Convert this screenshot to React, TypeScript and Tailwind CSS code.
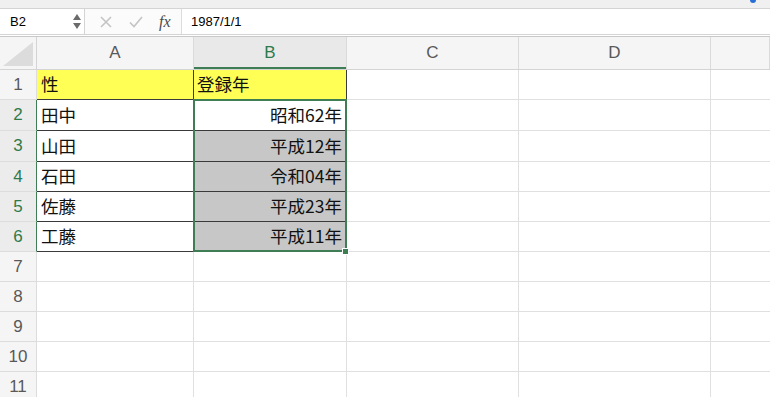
import React from "react";

const cols = [
  { key: "A", w: "w-[157px]" },
  { key: "B", w: "w-[153px]" },
  { key: "C", w: "w-[172px]" },
  { key: "D", w: "w-[192px]" },
  { key: "E", w: "flex-1" },
];

type Row = { a?: string; b?: string; gray?: boolean; h: string };

const rows: Row[] = [
  { a: "性", b: "登録年", h: "h-[30px]" },
  { a: "田中", b: "昭和62年", h: "h-[31px]" },
  { a: "山田", b: "平成12年", gray: true, h: "h-[31px]" },
  { a: "石田", b: "令和04年", gray: true, h: "h-[30px]" },
  { a: "佐藤", b: "平成23年", gray: true, h: "h-[30px]" },
  { a: "工藤", b: "平成11年", gray: true, h: "h-[30px]" },
  { h: "h-[30px]" },
  { h: "h-[30px]" },
  { h: "h-[30px]" },
  { h: "h-[30px]" },
  { h: "h-[30px]" },
];

const jp = "font-['Noto_Sans_CJK_JP','Noto_Sans',sans-serif] text-[17.5px] text-[#111]";

function FormulaBar() {
  return (
    <div className="flex h-[26px] border-b border-[#d4d4d4] bg-white">
      <div className="flex w-[85px] items-center justify-between border-r border-[#d4d4d4] pl-[10px] pr-[3px]">
        <span className="text-[13px] text-black">B2</span>
        <div className="flex flex-col items-center gap-[3px]">
          <svg width="8" height="6" viewBox="0 0 8 6">
            <path d="M4 0 L8 6 L0 6 Z" fill="#6b6b6b" />
          </svg>
          <svg width="8" height="6" viewBox="0 0 8 6">
            <path d="M0 0 L8 0 L4 6 Z" fill="#6b6b6b" />
          </svg>
        </div>
      </div>
      <div className="flex w-[96px] items-center bg-[#fbfbfb]">
        <svg width="12" height="12" viewBox="0 0 12 12" className="ml-[15px]">
          <path d="M1 1 L11 11 M11 1 L1 11" stroke="#c4c4c4" strokeWidth="1.6" />
        </svg>
        <svg width="14" height="12" viewBox="0 0 14 12" className="ml-[17px]">
          <path d="M1 6.5 L5 10.5 L13 1" stroke="#c4c4c4" strokeWidth="1.6" fill="none" />
        </svg>
        <span className="ml-[16px] font-['Liberation_Serif',serif] text-[16px] italic text-[#4a4a4a]">
          fx
        </span>
      </div>
      <div className="flex flex-1 items-center border-l border-[#dcdcdc] pl-[9px]">
        <span className="text-[13px] text-black">1987/1/1</span>
      </div>
    </div>
  );
}

function HeaderRow() {
  return (
    <div className="flex h-[33px] border-b border-[#d4d4d4] bg-[#f5f5f5]">
      <div className="relative w-[37px] border-r border-[#d4d4d4]">
        <svg width="30" height="24" viewBox="0 0 30 24" className="absolute bottom-[3px] right-[3px]">
          <path d="M30 0 L30 24 L0 24 Z" fill="#dcdcdc" />
        </svg>
      </div>
      {cols.map((c) => (
        <div
          key={c.key}
          className={`${c.w} flex items-center justify-center border-r border-[#dadada] text-[17px] ${
            c.key === "B"
              ? "bg-[#e9e9e9] text-[#2f7a4b] shadow-[inset_0_-2px_0_#3f7d55]"
              : "text-[#595959]"
          }`}
        >
          {c.key === "E" ? "" : c.key}
        </div>
      ))}
    </div>
  );
}

function SheetRow({ row, idx }: { row: Row; idx: number }) {
  const n = idx + 1;
  const inTable = n <= 6;
  const selected = n >= 2 && n <= 6;
  const dark = "border-[#3a3a3a]";
  const grid = "border-[#e0e0e0]";
  const fillA = n === 1 ? "bg-[#ffff55]" : "bg-white";
  const fillB = n === 1 ? "bg-[#ffff55]" : row.gray ? "bg-[#c7c7c7]" : "bg-white";
  return (
    <div className={`flex ${row.h}`}>
      <div
        className={`flex w-[37px] items-center justify-center border-b border-r text-[17px] ${
          selected
            ? "border-b-[#dcdcdc] border-r-[#3f7d55] bg-[#ececec] text-[#2f7a4b]"
            : "border-[#dcdcdc] bg-[#f5f5f5] text-[#595959]"
        }`}
      >
        {n}
      </div>
      <div
        className={`w-[157px] border-r border-b ${inTable ? `${dark} ${fillA}` : grid} flex items-center pl-[4px] ${jp}`}
      >
        {row.a}
      </div>
      <div
        className={`w-[153px] border-r border-b ${inTable ? `${dark} ${fillB}` : grid} flex items-center ${jp} ${
          n === 1 ? "pl-[3px]" : "justify-end pr-[4px]"
        }`}
      >
        {row.b}
      </div>
      <div className={`w-[172px] border-r border-b ${grid}`} />
      <div className={`w-[192px] border-r border-b ${grid}`} />
      <div className={`flex-1 border-b ${grid}`} />
    </div>
  );
}

export default function App() {
  return (
    <div className="h-[397px] w-[770px] overflow-hidden bg-white font-['Liberation_Sans',Arial,sans-serif]">
      <div className="relative h-[9px] border-b border-[#d4d4d4] bg-[#f0f0f0]">
        <div className="absolute left-[750px] top-[-3px] h-[6px] w-[6px] rounded-full bg-[#2a6fd6]" />
      </div>
      <FormulaBar />
      <div className="h-[2px] border-b border-[#c8c8c8] bg-white" />
      <div className="relative">
        <HeaderRow />
        {rows.map((r, i) => (
          <SheetRow key={i} row={r} idx={i} />
        ))}
        <div className="pointer-events-none absolute left-[193px] top-[62px] h-[153px] w-[154px] border-2 border-[#3f7d55]" />
        <div className="pointer-events-none absolute left-[342px] top-[211px] h-[7px] w-[7px] border border-white bg-[#3f7d55]" />
      </div>
    </div>
  );
}
